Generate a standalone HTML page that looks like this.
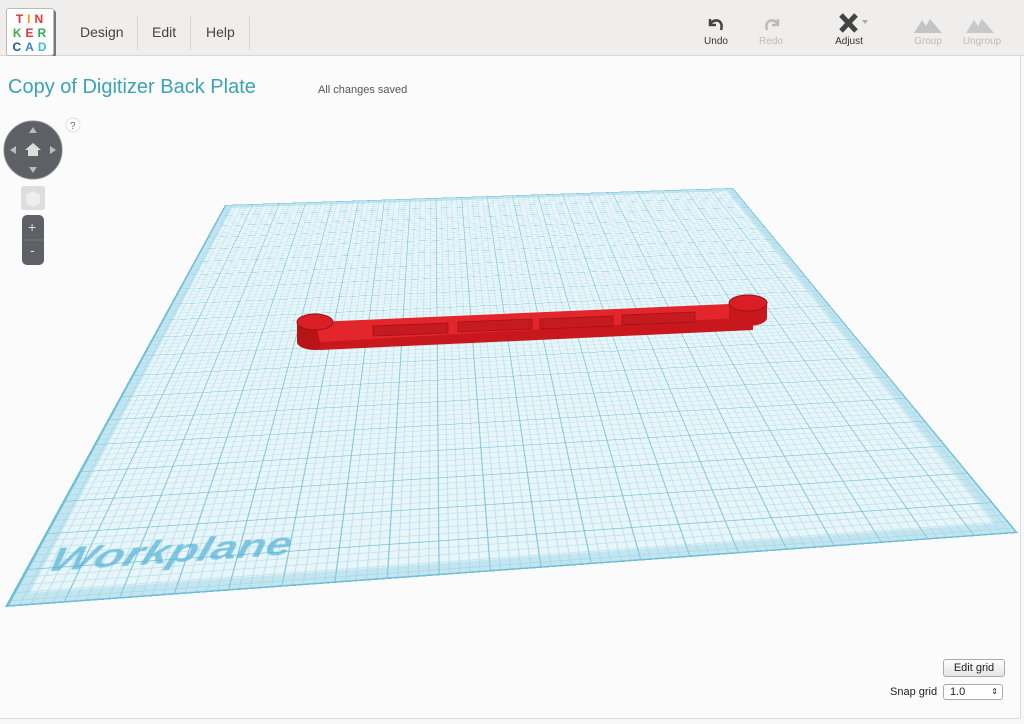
<!DOCTYPE html>
<html><head><meta charset="utf-8"><style>
body{margin:0;width:1024px;height:724px;overflow:hidden;background:#f8f8f8;font-family:"Liberation Sans",sans-serif;position:relative}
.hdr{position:absolute;left:0;top:0;width:1024px;height:55px;background:#efeeed;border-bottom:1px solid #d8d8d8}
.logo{position:absolute;left:6px;top:8px;width:48px;height:48px;background:#fff;border:1px solid #bbb;border-radius:3px;box-shadow:2px 2px 0 #777;font:bold 12px "Liberation Sans",sans-serif;text-align:center;line-height:14px;padding-top:3px;box-sizing:border-box;letter-spacing:4px;padding-left:3px}
.nav{position:absolute;top:0;height:55px;line-height:64px;font-size:14px;color:#444;}
.sep{position:absolute;top:17px;width:1px;height:33px;background:#d4d4d4}
.tool{position:absolute;top:36px;font-size:10px;color:#333;text-align:center;width:50px}
.main{position:absolute;left:0;top:56px;width:1020px;height:662px;background:#fbfbfb;border-right:1px solid #ddd;border-bottom:1px solid #ddd}
.title{position:absolute;left:8px;top:76px;font-size:20px;color:#3aa3b5}
.saved{position:absolute;left:318px;top:84px;font-size:11px;color:#555}
.plane{position:absolute;left:0;top:0;width:1000px;height:1000px;transform-origin:0 0;
transform:matrix3d(0.548294,-0.006665,0,0.000054972,-0.222570,0.090011,0,-0.000513985,0,0,1,0,225,205,0,1);
background-color:#e8f5f9;
background-image:linear-gradient(90deg,#6cbdd5 1.5px,transparent 1.5px),linear-gradient(#6cbdd5 1.5px,transparent 1.5px),linear-gradient(90deg,#b8e0ec 1px,transparent 1px),linear-gradient(#b8e0ec 1px,transparent 1px);
background-size:50px 50px,50px 50px,10px 10px,10px 10px;box-shadow:inset 0 0 0 14px rgba(140,205,228,.4);border:2px solid #6cbdd5;box-sizing:border-box}
.wp{position:absolute;left:18px;top:912px;font:italic bold 46px "Liberation Sans",sans-serif;color:rgba(90,180,215,.75)}
</style></head><body>
<div class="hdr">
<div class="logo"><span style="color:#d33">T</span><span style="color:#e90">I</span><span style="color:#e33">N</span><br><span style="color:#4a4">K</span><span style="color:#d33">E</span><span style="color:#3a5">R</span><br><span style="color:#259">C</span><span style="color:#38c">A</span><span style="color:#4bd">D</span></div>
<div class="nav" style="left:80px">Design</div><div class="sep" style="left:137px"></div>
<div class="nav" style="left:152px">Edit</div><div class="sep" style="left:190px"></div>
<div class="nav" style="left:206px">Help</div><div class="sep" style="left:249px"></div>
<svg style="position:absolute;left:706px;top:16px" width="20" height="16"><path d="M4 3 L4 9 L10 9 M4 8 Q8 3 13 5 Q17 8 15 14" fill="none" stroke="#444" stroke-width="2.5"/></svg>
<svg style="position:absolute;left:762px;top:16px" width="20" height="16"><path d="M16 3 L16 9 L10 9 M16 8 Q12 3 7 5 Q3 8 5 14" fill="none" stroke="#bbb" stroke-width="2.5"/></svg>
<svg style="position:absolute;left:838px;top:12px" width="30" height="24"><path d="M3 3 L18 19 M18 3 L3 19" stroke="#444" stroke-width="5"/><path d="M24 8 L30 8 L27 12Z" fill="#aaa"/></svg>
<svg style="position:absolute;left:914px;top:16px" width="80" height="18"><path d="M0 17 L8 4 L12 10 L16 3 L28 17Z" fill="#c4c4c4"/><path d="M52 17 L60 4 L64 10 L68 3 L80 17Z" fill="#c8c8c8"/></svg>
<div class="tool" style="left:691px">Undo</div><div class="tool" style="left:746px;color:#bbb">Redo</div>
<div class="tool" style="left:824px">Adjust</div><div class="tool" style="left:903px;color:#bbb">Group</div><div class="tool" style="left:957px;color:#bbb">Ungroup</div>
</div>
<div class="main"></div>
<div class="plane"><div class="wp">Workplane</div></div>
<div class="title">Copy of Digitizer Back Plate</div>
<div class="saved">All changes saved</div>
<svg style="position:absolute;left:0;top:110px" width="90" height="160">
<circle cx="73" cy="15" r="7" fill="#fff" stroke="#ddd"/><text x="70" y="19" font-size="10" fill="#666" font-family="Liberation Sans">?</text>
<circle cx="33" cy="40" r="29" fill="#5d6166" stroke="#888"/>
<path d="M33 17 l-4 6 h8z M33 63 l-4 -6 h8z M10 40 l6 -4 v8z M56 40 l-6 -4 v8z" fill="#bbb"/>
<path d="M33 33 l-8 7 h3 v6 h10 v-6 h3z" fill="#ddd"/>
<rect x="21" y="76" width="24" height="24" rx="3" fill="#ddd"/><path d="M33 81 l7 4 v8 l-7 4 l-7 -4 v-8z" fill="#eee"/>
<rect x="22" y="105" width="22" height="50" rx="5" fill="#5d6166"/><line x1="22" y1="130" x2="44" y2="130" stroke="#777"/>
<text x="28" y="122" fill="#ddd" font-size="14" font-family="Liberation Sans">+</text><text x="30" y="145" fill="#ddd" font-size="14" font-family="Liberation Sans">-</text>
</svg>
<svg style="position:absolute;left:0;top:0" width="1024" height="724">
<path d="M297 322 L297 342 A18 8 0 0 0 333 342 L753 324 L766 318 L766 303 L333 322 Z" fill="#b71418"/>
<path d="M320 342 L735 318 L753 326 L753 330 L320 350 Z" fill="#c8181d"/>
<path d="M315 322 L730 304 L750 312 L738 318 L320 342 Z" fill="#e3262b"/>
<path d="M373 326 L448 323 L448 333 L373 336Z M458 322 L532 319 L532 329 L458 332Z M540 319 L613 316 L613 326 L540 329Z M622 315 L695 312 L695 322 L622 325Z" fill="#c51a1f" stroke="#a31015" stroke-width="0.8"/>
<ellipse cx="315" cy="322" rx="18" ry="8" fill="#d91f25" stroke="#9b1014"/>
<path d="M729 303 L729 318 A19 8 0 0 0 767 318 L767 303Z" fill="#c8181d"/>
<ellipse cx="748" cy="303" rx="19" ry="8" fill="#d91f25" stroke="#9b1014"/>
</svg>
<div style="position:absolute;left:943px;top:659px;width:60px;height:16px;border:1px solid #aaa;border-radius:3px;background:linear-gradient(#fff,#e4e4e4);font-size:11px;text-align:center;line-height:16px;color:#222">Edit grid</div>
<div style="position:absolute;left:890px;top:686px;font-size:11px;color:#222">Snap grid</div>
<div style="position:absolute;left:943px;top:684px;height:14px;border:1px solid #aaa;border-radius:3px;background:#fff;font-size:11px;line-height:14px;color:#222;padding-left:6px;width:52px">1.0<span style="float:right;margin-right:4px;font-size:8px">&#8661;</span></div>
</body></html>
